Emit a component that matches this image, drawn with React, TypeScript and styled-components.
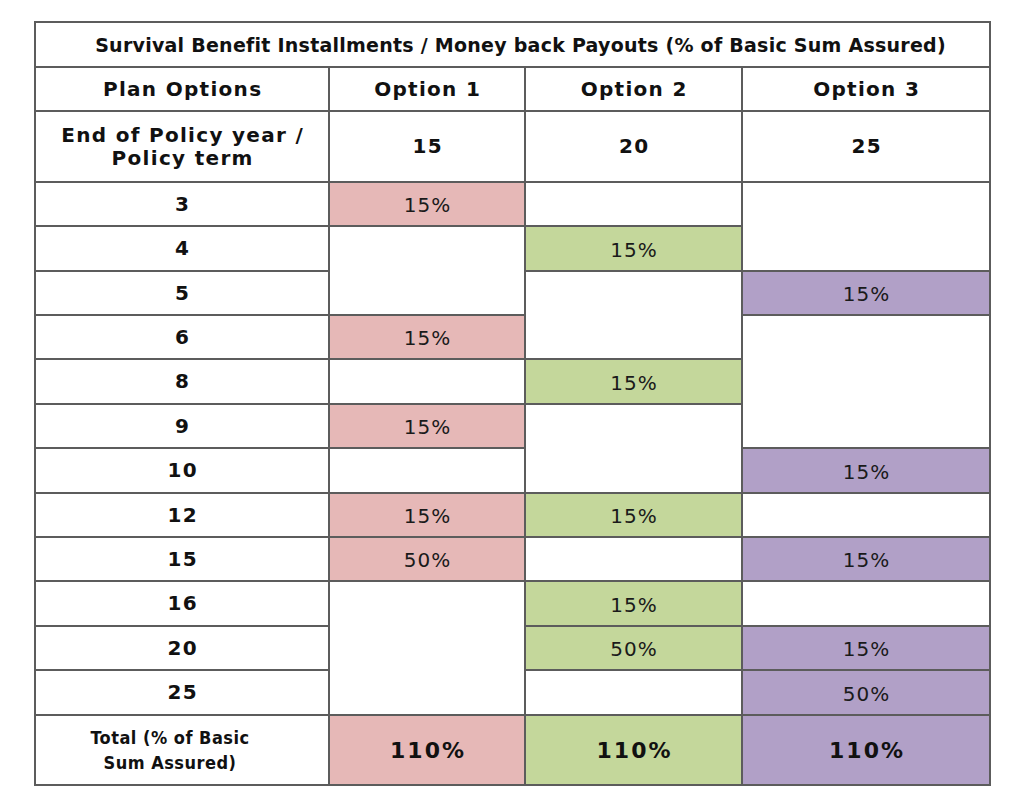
import React from "react";
import styled, { createGlobalStyle } from "styled-components";

const Global = createGlobalStyle`
  html, body { margin: 0; padding: 0; background: #ffffff; }
  body { font-family: "DejaVu Sans", Verdana, sans-serif; color: #111; }
`;

type Tone = "pink" | "green" | "purple" | "white";
const toneBg: Record<Tone, string> = {
  pink: "#e6b8b7",
  green: "#c4d79b",
  purple: "#b1a0c7",
  white: "#ffffff",
};

const Page = styled.div`
  padding: 21px 0 0 34px;
`;

const Sheet = styled.div`
  display: grid;
  width: max-content;
  grid-template-columns: 292px 194px 215px 246px;
  grid-template-rows: 43px 42px 69px 42px 43px 42px 42px 43px 42px 43px 42px 42px 43px 42px 43px 68px;
  gap: 2px;
  padding: 2px;
  background: #5c5c5c;
`;

const Cell = styled.div<{ $col: number; $row: number; $span?: number; $tone?: Tone }>`
  grid-column: ${(p) => p.$col};
  grid-row: ${(p) => p.$row} / span ${(p) => p.$span ?? 1};
  background: ${(p) => toneBg[p.$tone ?? "white"]};
  display: flex;
  align-items: center;
  justify-content: center;
  text-align: center;
`;

const TitleCell = styled.div`
  grid-column: 1 / span 4;
  grid-row: 1;
  background: #fff;
  display: flex;
  align-items: center;
  justify-content: center;
  padding-left: 16px;
  font-weight: bold;
  font-size: 19px;
  letter-spacing: 0.25px;
  color: #111;
`;

const HeadText = styled.span`
  font-weight: bold;
  font-size: 20px;
  letter-spacing: 1.3px;
  padding-left: 1.3px;
  line-height: 23px;
  color: #111;
`;

const Value = styled.span`
  font-size: 20px;
  letter-spacing: 1px;
  padding-left: 1px;
  padding-top: 2px;
  color: #1a1a1a;
`;

const TotalLabel = styled.span`
  font-family: "DejaVu Sans Condensed", "DejaVu Sans", sans-serif;
  font-stretch: condensed;
  font-weight: bold;
  font-size: 18px;
  letter-spacing: 0.5px;
  line-height: 25px;
  padding-right: 24px;
  color: #111;
`;

const TotalValue = styled.span`
  font-weight: bold;
  font-size: 22px;
  letter-spacing: 2px;
  padding-left: 2px;
  color: #111;
`;

const years = ["3", "4", "5", "6", "8", "9", "10", "12", "15", "16", "20", "25"];

type Block = { r: number; span: number; text: string };
const columns: { tone: Tone; blocks: Block[] }[] = [
  {
    tone: "pink",
    blocks: [
      { r: 0, span: 1, text: "15%" },
      { r: 1, span: 2, text: "" },
      { r: 3, span: 1, text: "15%" },
      { r: 4, span: 1, text: "" },
      { r: 5, span: 1, text: "15%" },
      { r: 6, span: 1, text: "" },
      { r: 7, span: 1, text: "15%" },
      { r: 8, span: 1, text: "50%" },
      { r: 9, span: 3, text: "" },
    ],
  },
  {
    tone: "green",
    blocks: [
      { r: 0, span: 1, text: "" },
      { r: 1, span: 1, text: "15%" },
      { r: 2, span: 2, text: "" },
      { r: 4, span: 1, text: "15%" },
      { r: 5, span: 2, text: "" },
      { r: 7, span: 1, text: "15%" },
      { r: 8, span: 1, text: "" },
      { r: 9, span: 1, text: "15%" },
      { r: 10, span: 1, text: "50%" },
      { r: 11, span: 1, text: "" },
    ],
  },
  {
    tone: "purple",
    blocks: [
      { r: 0, span: 2, text: "" },
      { r: 2, span: 1, text: "15%" },
      { r: 3, span: 3, text: "" },
      { r: 6, span: 1, text: "15%" },
      { r: 7, span: 1, text: "" },
      { r: 8, span: 1, text: "15%" },
      { r: 9, span: 1, text: "" },
      { r: 10, span: 1, text: "15%" },
      { r: 11, span: 1, text: "50%" },
    ],
  },
];

const heads = ["Option 1", "Option 2", "Option 3"];
const terms = ["15", "20", "25"];
const FIRST = 4;

export default function App() {
  return (
    <Page>
      <Global />
      <Sheet>
        <TitleCell>Survival Benefit Installments / Money back Payouts (% of Basic Sum Assured)</TitleCell>

        <Cell $col={1} $row={2}>
          <HeadText>Plan Options</HeadText>
        </Cell>
        {heads.map((h, i) => (
          <Cell key={h} $col={i + 2} $row={2}>
            <HeadText>{h}</HeadText>
          </Cell>
        ))}

        <Cell $col={1} $row={3}>
          <HeadText>
            End of Policy year /<br />
            Policy term
          </HeadText>
        </Cell>
        {terms.map((t, i) => (
          <Cell key={t} $col={i + 2} $row={3}>
            <HeadText>{t}</HeadText>
          </Cell>
        ))}

        {years.map((y, i) => (
          <Cell key={"y" + y} $col={1} $row={FIRST + i}>
            <HeadText>{y}</HeadText>
          </Cell>
        ))}

        {columns.map((c, ci) =>
          c.blocks.map((b) => (
            <Cell
              key={`${ci}-${b.r}`}
              $col={ci + 2}
              $row={FIRST + b.r}
              $span={b.span}
              $tone={b.text ? c.tone : "white"}
            >
              {b.text && <Value>{b.text}</Value>}
            </Cell>
          ))
        )}

        <Cell $col={1} $row={16}>
          <TotalLabel>
            Total (% of Basic
            <br />
            Sum Assured)
          </TotalLabel>
        </Cell>
        {columns.map((c, ci) => (
          <Cell key={"t" + ci} $col={ci + 2} $row={16} $tone={c.tone}>
            <TotalValue>110%</TotalValue>
          </Cell>
        ))}
      </Sheet>
    </Page>
  );
}
